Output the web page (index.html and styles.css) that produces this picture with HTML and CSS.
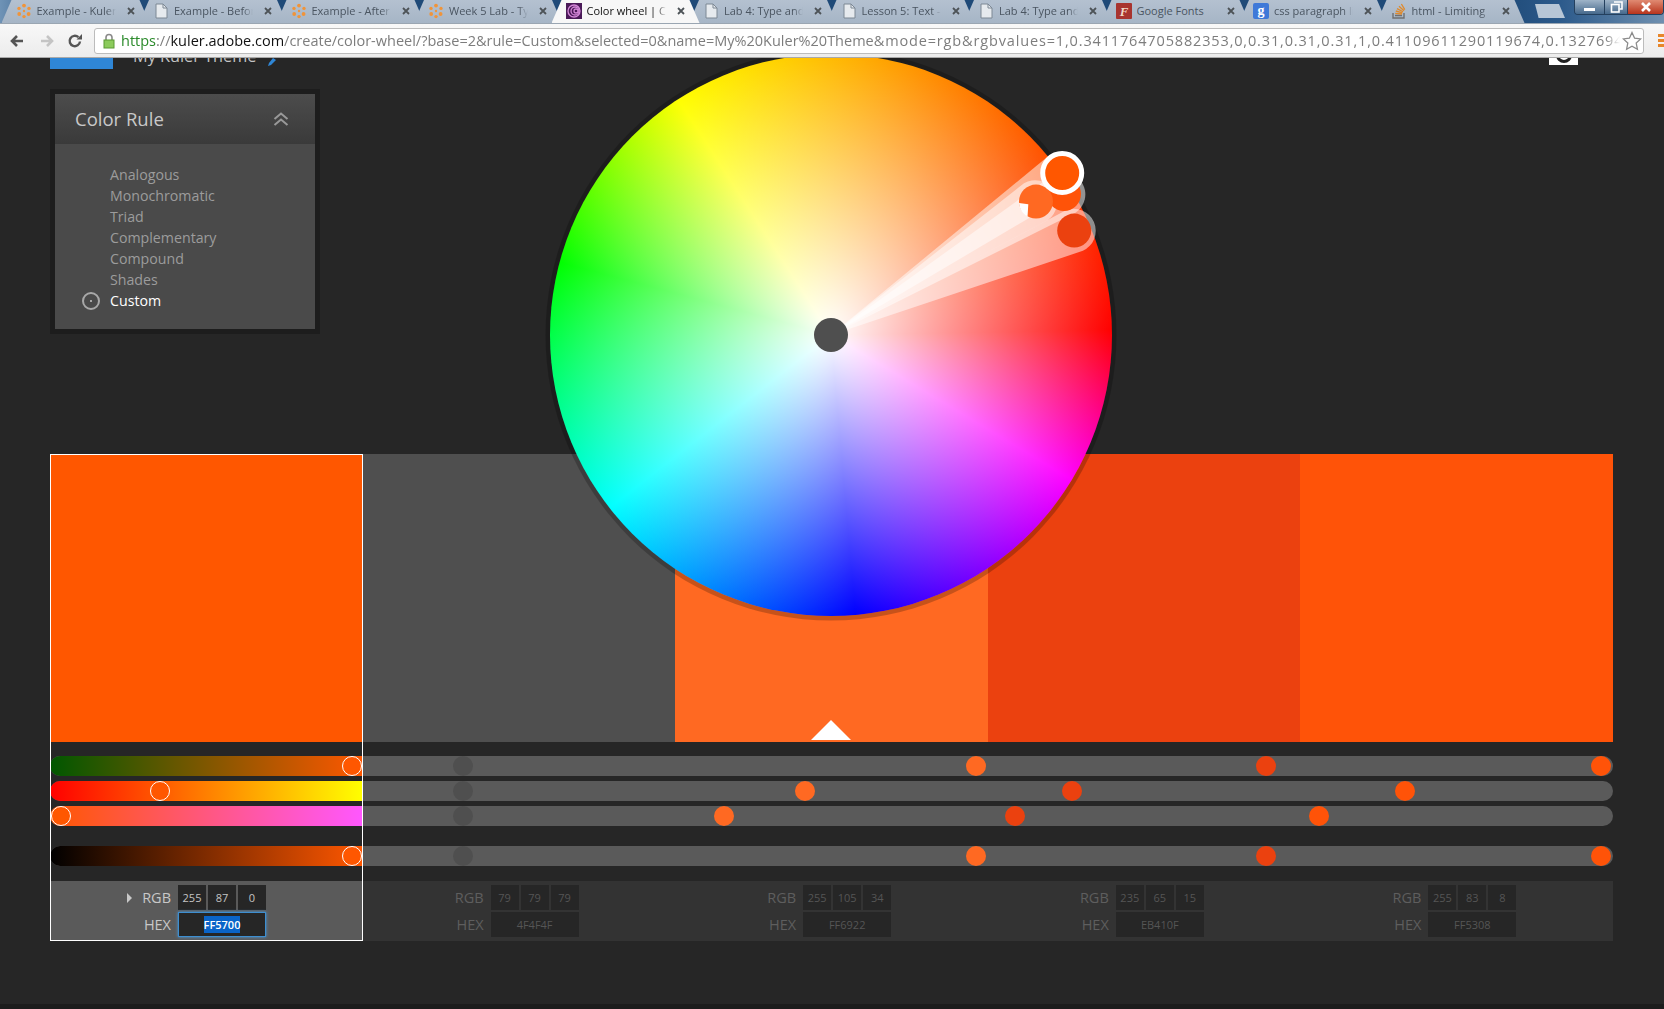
FILE: index.html
```html
<!DOCTYPE html>
<html lang="en">
<head>
  <meta charset="UTF-8" />
  <title>Color wheel | Create</title>
  <link rel="stylesheet" href="styles.css">
</head>
<body>
  <svg class="defs" width="0" height="0">
    <symbol id="flower" viewBox="0 0 16 16">
      <g fill="#f0943a">
        <circle cx="8" cy="2.6" r="1.9"/><circle cx="13" cy="5.4" r="1.7"/><circle cx="12.6" cy="11" r="1.9"/>
        <circle cx="8" cy="13.6" r="1.7"/><circle cx="3.2" cy="11" r="1.9"/><circle cx="3" cy="5.4" r="1.7"/>
        <circle cx="8" cy="8" r="1.2"/>
      </g>
    </symbol>
    <symbol id="doc" viewBox="0 0 16 16">
      <path d="M3 1h7l4 4v10H3z" fill="#e6eaee" stroke="#7d8894"/>
      <path d="M10 1v4h4" fill="none" stroke="#7d8894"/>
    </symbol>
    <symbol id="close" viewBox="0 0 8 8">
      <path d="M1 1l6 6M7 1L1 7" stroke="#4d5357" stroke-width="1.8"/>
    </symbol>
  </svg>

  <header class="chrome">
    <div class="tabstrip">
      <div class="tab"><svg class="favicon"><use href="#flower"/></svg><span class="tab-title">Example - Kuler</span><svg class="tab-close"><use href="#close"/></svg></div>
      <div class="tab"><svg class="favicon"><use href="#doc"/></svg><span class="tab-title">Example - Before</span><svg class="tab-close"><use href="#close"/></svg></div>
      <div class="tab"><svg class="favicon"><use href="#flower"/></svg><span class="tab-title">Example - After</span><svg class="tab-close"><use href="#close"/></svg></div>
      <div class="tab"><svg class="favicon"><use href="#flower"/></svg><span class="tab-title">Week 5 Lab - Type</span><svg class="tab-close"><use href="#close"/></svg></div>
      <div class="tab active">
        <svg class="favicon" viewBox="0 0 16 16">
          <rect width="16" height="16" fill="#4a1a58"/>
          <g fill="none" stroke="#d487d8" stroke-width="1.3">
            <circle cx="10" cy="8" r="2"/><circle cx="9" cy="8" r="4"/><circle cx="8" cy="8" r="6"/>
          </g>
        </svg>
        <span class="tab-title">Color wheel | Create</span><svg class="tab-close"><use href="#close"/></svg>
      </div>
      <div class="tab"><svg class="favicon"><use href="#doc"/></svg><span class="tab-title">Lab 4: Type and Text</span><svg class="tab-close"><use href="#close"/></svg></div>
      <div class="tab"><svg class="favicon"><use href="#doc"/></svg><span class="tab-title">Lesson 5: Text - Type</span><svg class="tab-close"><use href="#close"/></svg></div>
      <div class="tab"><svg class="favicon"><use href="#doc"/></svg><span class="tab-title">Lab 4: Type and Text</span><svg class="tab-close"><use href="#close"/></svg></div>
      <div class="tab">
        <svg class="favicon" viewBox="0 0 16 16">
          <rect width="16" height="16" rx="1" fill="#a8342f"/>
          <text x="8" y="13" text-anchor="middle" class="fav-f">F</text>
        </svg>
        <span class="tab-title plain">Google Fonts</span><svg class="tab-close"><use href="#close"/></svg>
      </div>
      <div class="tab">
        <svg class="favicon" viewBox="0 0 16 16">
          <rect width="16" height="16" rx="2" fill="#3f79d8"/>
          <text x="8" y="12" text-anchor="middle" class="fav-g">g</text>
        </svg>
        <span class="tab-title">css paragraph limit</span><svg class="tab-close"><use href="#close"/></svg>
      </div>
      <div class="tab">
        <svg class="favicon" viewBox="0 0 16 16">
          <path d="M2 10v5h11v-5" fill="none" stroke="#6f6f6f" stroke-width="1.4"/>
          <path d="M4 12.5h7" stroke="#6f6f6f" stroke-width="1.3"/>
          <path d="M4.2 10.4l6.8.6M4.8 8l6.6 1.8M6 5.6l6 3.2M8 3.2l5 4.6M10.4 1l3.4 5.6" stroke="#e08a2c" stroke-width="1.3"/>
        </svg>
        <span class="tab-title">html - Limiting</span><svg class="tab-close"><use href="#close"/></svg>
      </div>
      <div class="new-tab"></div>
      <div class="win-controls">
        <div class="win-btn win-min"><span class="win-dash"></span></div>
        <div class="win-btn win-max">
          <svg width="13" height="12" viewBox="0 0 13 12"><path d="M4 1h8v7H9.500" fill="none" stroke="#fff" stroke-width="1.6"/><rect x="1.500" y="3.500" width="7.500" height="7.500" fill="none" stroke="#fff" stroke-width="1.600"/></svg>
        </div>
        <div class="win-btn win-close">
          <svg width="12" height="10" viewBox="0 0 12 10"><path d="M2 1l8 8M10 1L2 9" stroke="#fff" stroke-width="2.6"/></svg>
        </div>
      </div>
    </div>

    <div class="toolbar">
      <svg class="nav-icon nav-back" viewBox="0 0 16 16"><path d="M14 8H4M8 3L3 8l5 5" fill="none" stroke="#555" stroke-width="2.6"/></svg>
      <svg class="nav-icon nav-fwd" viewBox="0 0 16 16"><path d="M2 8h10M8 3l5 5-5 5" fill="none" stroke="#c4c4c4" stroke-width="2.6"/></svg>
      <svg class="nav-icon nav-reload" viewBox="0 0 16 16">
        <path d="M13 8.500A5.200 5.200 0 1 1 11.400 4.200" fill="none" stroke="#555" stroke-width="2.4"/>
        <path d="M9.500 6.500H15V1z" fill="#555"/>
      </svg>
      <div class="omnibox">
        <svg class="lock" viewBox="0 0 12 16">
          <path d="M3 7V4.500a3 3 0 0 1 6 0V7" fill="none" stroke="#8a8a8a" stroke-width="1.6"/>
          <rect x="1" y="7" width="10" height="8" fill="#8ccb5c" stroke="#5b9a33"/>
        </svg>
        <div class="url"><span class="url-https">https</span><span class="url-rest">://</span><span class="url-host">kuler.adobe.com</span><span class="url-rest">/create/color-wheel/?base=2&amp;rule=Custom&amp;selected=0&amp;name=My%20Kuler%20Theme</span><span class="url-rest url-values">&amp;mode=rgb&amp;rgbvalues=1,0.3411764705882353,0,0.31,0.31,0.31,1,0.41109611290119674,0.13276946</span></div>
        <svg class="star" viewBox="0 0 20 20"><path d="M10 1.500l2.600 5.700 6.100.7-4.500 4.200 1.200 6.100L10 15.200l-5.400 3 1.200-6.100-4.500-4.200 6.100-.7z" fill="#fff" stroke="#8b8b8b" stroke-width="1.3"/></svg>
      </div>
      <div class="menu-bars"><span></span><span></span><span></span></div>
    </div>
  </header>

  <main class="page">
    <div class="theme-bar">
      <div class="theme-thumb"></div>
      <div class="theme-name">My Kuler Theme</div>
      <svg class="pencil" width="10" height="8" viewBox="0 0 10 8"><path d="M1 8l1-3 4-5 3 2-5 5z" fill="#2f86d6"/></svg>
      <div class="camera"><span class="camera-lens"></span></div>
    </div>

    <section class="rule-panel">
      <div class="rule-head">
        <span class="rule-title">Color Rule</span>
        <svg width="16" height="14" viewBox="0 0 16 14"><path d="M1.500 7L8 1.500 14.500 7M1.500 13L8 7.500 14.500 13" fill="none" stroke="#999" stroke-width="2"/></svg>
      </div>
      <ul class="rule-list">
        <li>Analogous</li>
        <li>Monochromatic</li>
        <li>Triad</li>
        <li>Complementary</li>
        <li>Compound</li>
        <li>Shades</li>
        <li class="current">Custom</li>
      </ul>
    </section>

    <div class="wheel">
      <svg class="wheel-marks" viewBox="-286 -286 572 572" width="572" height="572">
        <g class="beams">
          <path d="M0 0L243.800 -144A22 22 0 0 0 218.600 -180Z"/>
          <path d="M0 0L244.400 -122.200A22 22 0 0 0 221.600 -159.800Z"/>
          <path d="M0 0L217 -115A22 22 0 0 0 193 -151.800Z"/>
          <path d="M0 0L251.900 -84.200A22 22 0 0 0 234.500 -124.600Z"/>
        </g>
        <circle cx="233" cy="-141" r="17" fill="#ff5308"/>
        <circle cx="205" cy="-133.400" r="17" fill="#ff6922"/>
        <path d="M197.300 -130.700L188 -132A17 17 0 0 0 196.500 -118.200Z" fill="#fff"/>
        <circle cx="243.200" cy="-104.400" r="17" fill="#eb410f"/>
        <circle cx="231.200" cy="-162" r="19.500" fill="#ff5700" stroke="#fff" stroke-width="5"/>
        <circle cx="0" cy="0" r="17" fill="#4f4f4f"/>
      </svg>
    </div>

    <section class="editor">
      <div class="swatches">
        <div class="swatch s1"></div>
        <div class="swatch s2"></div>
        <div class="swatch s3"><span class="base-mark"></span></div>
        <div class="swatch s4"></div>
        <div class="swatch s5"></div>
      </div>

      <div class="sliders">
        <div class="track">
          <div class="track-fill fill-r"></div>
          <span class="thumb c1" style="left:301.5px"></span>
          <span class="thumb c2" style="left:413px"></span>
          <span class="thumb c3" style="left:926px"></span>
          <span class="thumb c4" style="left:1216px"></span>
          <span class="thumb c5" style="left:1551px"></span>
        </div>
        <div class="track">
          <div class="track-fill fill-g"></div>
          <span class="thumb c1" style="left:109.5px"></span>
          <span class="thumb c2" style="left:413px"></span>
          <span class="thumb c3" style="left:755px"></span>
          <span class="thumb c4" style="left:1022px"></span>
          <span class="thumb c5" style="left:1355px"></span>
        </div>
        <div class="track">
          <div class="track-fill fill-b"></div>
          <span class="thumb c1" style="left:11px"></span>
          <span class="thumb c2" style="left:413px"></span>
          <span class="thumb c3" style="left:673.5px"></span>
          <span class="thumb c4" style="left:965px"></span>
          <span class="thumb c5" style="left:1269px"></span>
        </div>
        <div class="track track-gap">
          <div class="track-fill fill-v"></div>
          <span class="thumb c1" style="left:301.5px"></span>
          <span class="thumb c2" style="left:413px"></span>
          <span class="thumb c3" style="left:926px"></span>
          <span class="thumb c4" style="left:1216px"></span>
          <span class="thumb c5" style="left:1551px"></span>
        </div>
      </div>

      <div class="values">
        <div class="value-col on">
          <div class="value-row">
            <span class="caret"></span><span class="value-label">RGB</span>
            <span class="cell">255</span><span class="cell">87</span><span class="cell">0</span>
          </div>
          <div class="value-row">
            <span class="value-label">HEX</span>
            <span class="cell hex focus"><span class="sel">FF5700</span></span>
          </div>
        </div>
        <div class="value-col">
          <div class="value-row"><span class="value-label">RGB</span><span class="cell">79</span><span class="cell">79</span><span class="cell">79</span></div>
          <div class="value-row"><span class="value-label">HEX</span><span class="cell hex">4F4F4F</span></div>
        </div>
        <div class="value-col">
          <div class="value-row"><span class="value-label">RGB</span><span class="cell">255</span><span class="cell">105</span><span class="cell">34</span></div>
          <div class="value-row"><span class="value-label">HEX</span><span class="cell hex">FF6922</span></div>
        </div>
        <div class="value-col">
          <div class="value-row"><span class="value-label">RGB</span><span class="cell">235</span><span class="cell">65</span><span class="cell">15</span></div>
          <div class="value-row"><span class="value-label">HEX</span><span class="cell hex">EB410F</span></div>
        </div>
        <div class="value-col">
          <div class="value-row"><span class="value-label">RGB</span><span class="cell">255</span><span class="cell">83</span><span class="cell">8</span></div>
          <div class="value-row"><span class="value-label">HEX</span><span class="cell hex">FF5308</span></div>
        </div>
      </div>

      <div class="selected-frame"></div>
    </section>

    <div class="page-foot"></div>
  </main>
</body>
</html>
```

FILE: styles.css
```css
* { box-sizing: border-box; }
html, body { margin: 0; height: 100%; }
body {
  font-family: "Open Sans", "Noto Sans", sans-serif;
  background: #262626;
  overflow: hidden;
  display: flex;
  flex-direction: column;
}
.defs { position: absolute; }

/* browser chrome */
.chrome { position: relative; z-index: 5; height: 58px; flex: none; }
.tabstrip {
  height: 23px;
  display: flex;
  padding-left: 1.5px;
  background: linear-gradient(90deg, #6f93b6 0, #1f4a78 60px, #1f4a78 1500px, #2c5a8b 1560px, #6f90b0 1664px);
  overflow: hidden;
}
.tab {
  width: 148px;
  flex: none;
  margin-right: -10.5px;
  height: 23px;
  padding: 0 15px 2px 14px;
  display: flex;
  align-items: center;
  gap: 5px;
  font-size: 11px;
  color: #4a5561;
  background: linear-gradient(#b4c1d0, #a6b5c6);
  clip-path: polygon(10px 0, calc(100% - 10px) 0, 100% 100%, 0 100%);
}
.tab.active {
  position: relative;
  z-index: 2;
  background: #f7f7f7;
  color: #111;
}
.favicon { width: 16px; height: 16px; flex: none; }
.fav-f { font: italic bold 13px "Liberation Serif", serif; fill: #f0d8c8; }
.fav-g { font: bold 14px "Liberation Serif", serif; fill: #fff; }
.tab-title {
  flex: 1;
  min-width: 0;
  white-space: nowrap;
  overflow: hidden;
  -webkit-mask-image: linear-gradient(90deg, #000 88%, transparent);
  mask-image: linear-gradient(90deg, #000 88%, transparent);
}
.tab-title.plain { -webkit-mask-image: none; mask-image: none; }
.tab-close { width: 8px; height: 8px; margin-left: 6px; flex: none; }
.new-tab {
  width: 30px;
  height: 14px;
  margin: 4px 0 0 21px;
  flex: none;
  background: #b7c6d6;
  clip-path: polygon(0 0, 80% 0, 100% 100%, 12% 100%);
}
.win-controls {
  margin-left: auto;
  width: 90px;
  height: 15px;
  display: flex;
  flex: none;
  border: 1px solid #24405e;
  border-top: 0;
  border-radius: 0 0 4px 4px;
  overflow: hidden;
}
.win-btn { display: flex; align-items: center; justify-content: center; }
.win-min { width: 29px; background: linear-gradient(#9fb4c8, #46698c); }
.win-max { width: 23px; background: linear-gradient(#9fb4c8, #46698c); border-left: 1px solid #24405e; }
.win-close { flex: 1; background: linear-gradient(#e08a72, #b8341c); border-left: 1px solid #24405e; }
.win-dash { width: 11px; height: 3px; margin-top: 5px; background: #fff; }

.toolbar {
  height: 35px;
  display: flex;
  align-items: center;
  background: linear-gradient(#f8f8f8, #ececec);
  border-bottom: 1px solid #a9a9a9;
  border-top: 1px solid #9aa6b2;
}
.nav-icon { width: 16px; height: 16px; flex: none; }
.nav-back { margin-left: 9px; }
.nav-fwd { margin-left: 14px; }
.nav-reload { margin-left: 12px; }
.omnibox {
  width: 1550px;
  height: 26px;
  margin-left: 11px;
  padding: 0 3px 0 8px;
  flex: none;
  display: flex;
  align-items: center;
  background: #fff;
  border: 1px solid #bcbcbc;
  border-radius: 3px;
}
.lock { width: 12px; height: 16px; flex: none; }
.url {
  margin-left: 6px;
  width: 1499px;
  flex: none;
  font-size: 14.5px;
  white-space: nowrap;
  overflow: hidden;
  -webkit-mask-image: linear-gradient(90deg, #000 99%, transparent);
  mask-image: linear-gradient(90deg, #000 99%, transparent);
}
.url-https { color: #2a8a2a; }
.url-rest { color: #7d7d7d; }
.url-host { color: #111; }
.url-values { letter-spacing: .85px; }
.star { width: 20px; height: 20px; margin-left: 2px; flex: none; }
.menu-bars {
  margin-left: 14px;
  display: flex;
  flex-direction: column;
  gap: 2px;
  width: 6px;
  overflow: hidden;
}
.menu-bars span { height: 3px; background: #e8862a; }

/* page */
.page {
  position: relative;
  flex: 1;
  display: flex;
  flex-direction: column;
  padding: 0 51px 0 50px;
}
.theme-bar {
  height: 11px;
  flex: none;
  display: flex;
  overflow: hidden;
}
.theme-thumb { width: 63px; height: 11px; background: #2f86d6; flex: none; }
.theme-name {
  margin: -6px 0 0 20px;
  line-height: 8px;
  font-size: 16.3px;
  color: #c4c4c4;
}
.pencil { margin: 0 0 0 11px; }
.camera {
  margin-left: auto;
  margin-right: 35px;
  width: 29px;
  height: 7px;
  background: #fff;
  display: flex;
  justify-content: center;
  overflow: hidden;
}
.camera-lens {
  width: 16px;
  height: 16px;
  margin-top: -11px;
  border-radius: 50%;
  border: 3px solid #222;
}

.rule-panel {
  width: 270px;
  height: 245px;
  margin-top: 20px;
  flex: none;
  border: 5px solid #1d1d1d;
  background: #4a4a4a;
}
.rule-head {
  height: 50px;
  padding: 0 26px 2px 20px;
  display: flex;
  align-items: center;
  justify-content: space-between;
  background: linear-gradient(#4c4c4c, #3a3a3a);
}
.rule-head svg { margin-top: 2px; }
.rule-title { font-size: 18.5px; color: #c8c8c8; }
.rule-list {
  list-style: none;
  margin: 0;
  padding: 20px 0 0 55px;
  font-size: 14.2px;
  line-height: 21px;
  color: #9c9c9c;
}
.rule-list .current {
  position: relative;
  color: #fff;
}
.rule-list .current::before {
  content: "";
  position: absolute;
  left: -28.5px;
  top: 2px;
  width: 14px;
  height: 14px;
  border: 2px solid #a8a8a8;
  border-radius: 50%;
  background: radial-gradient(circle, #a8a8a8 1px, transparent 1.5px);
}

.wheel {
  position: absolute;
  left: 550.4px;
  top: -4px;
  z-index: 3;
  width: 562px;
  height: 562px;
  border-radius: 50%;
  background:
    radial-gradient(closest-side, #fff, rgba(255, 255, 255, 0)),
    conic-gradient(from 89deg, #f00 0deg, #f0f 32deg, #00f 86deg, #0ff 143deg, #0f0 196deg, #ff0 238deg, #f00 360deg);
  box-shadow: 0 0 0 4.5px rgba(0, 0, 0, .22);
}
.wheel-marks {
  position: absolute;
  left: -5px;
  top: -5px;
}
.beams path { fill: #fff; fill-opacity: .5; }

.editor {
  position: relative;
  margin-top: 120px;
  flex: none;
}
.swatches { display: flex; height: 288px; }
.swatch { flex: 1; position: relative; }
.s1 { background: #ff5700; }
.s2 { background: #4f4f4f; }
.s3 { background: #ff6922; }
.s4 { background: #eb410f; }
.s5 { background: #ff5308; }
.base-mark {
  position: absolute;
  left: 50%;
  bottom: 2px;
  margin-left: -20.5px;
  width: 40px;
  height: 20px;
  background: #fff;
  clip-path: polygon(50% 0, 100% 100%, 0 100%);
}

.sliders {
  margin-top: 14px;
  display: flex;
  flex-direction: column;
  gap: 5px;
}
.track {
  position: relative;
  height: 20px;
  border-radius: 10px;
  background: #5a5a5a;
}
.track-gap { margin-top: 15px; }
.track-fill {
  width: 312.6px;
  height: 20px;
  border-radius: 10px 0 0 10px;
}
.fill-r { background: linear-gradient(90deg, #005700, #ff5700); }
.fill-g { background: linear-gradient(90deg, #f00, #ff0); }
.fill-b { background: linear-gradient(90deg, #ff5700, #ff57ff); }
.fill-v { background: linear-gradient(90deg, #000, #ff5700); }
.thumb {
  position: absolute;
  top: 0;
  width: 20px;
  height: 20px;
  margin-left: -10px;
  border-radius: 50%;
}
.c1 { background: #ff5700; border: 1.5px solid #fff; }
.c2 { background: #4f4f4f; }
.c3 { background: #ff6922; }
.c4 { background: #eb410f; }
.c5 { background: #ff5308; }

.values {
  margin-top: 15px;
  display: flex;
  height: 60px;
  background: #333;
}
.value-col {
  flex: 1;
  padding: 4px 0 0 128px;
  display: flex;
  flex-direction: column;
  gap: 2px;
  color: #5e5e5e;
}
.value-col.on { background: #5a5a5a; color: #c8c8c8; }
.value-row {
  position: relative;
  height: 25px;
  display: flex;
  gap: 2px;
}
.value-label {
  position: absolute;
  right: calc(100% + 7px);
  font-size: 14.5px;
  line-height: 25px;
}
.caret {
  position: absolute;
  left: -51px;
  top: 8px;
  border-left: 5px solid #c8c8c8;
  border-top: 5px solid transparent;
  border-bottom: 5px solid transparent;
}
.cell {
  width: 28px;
  height: 25px;
  background: #262626;
  text-align: center;
  font-size: 11px;
  line-height: 25px;
  color: #555;
}
.on .cell { color: #c4c4c4; }
.cell.hex { width: 88px; }
.cell.focus {
  border: 1px solid #3d8ed0;
  box-shadow: 0 0 3px #4a9be0;
  line-height: 23px;
}
.sel { background: #0a64c8; color: #fff; font-weight: 600; padding: 1px 0; }

.selected-frame {
  position: absolute;
  left: 0;
  top: 0;
  width: 313px;
  height: 100%;
  border: 1px solid #fff;
  z-index: 1;
  pointer-events: none;
}

.page-foot {
  margin: auto -51px 0 -50px;
  height: 5px;
  background: #1c1c1c;
  flex: none;
}
```
